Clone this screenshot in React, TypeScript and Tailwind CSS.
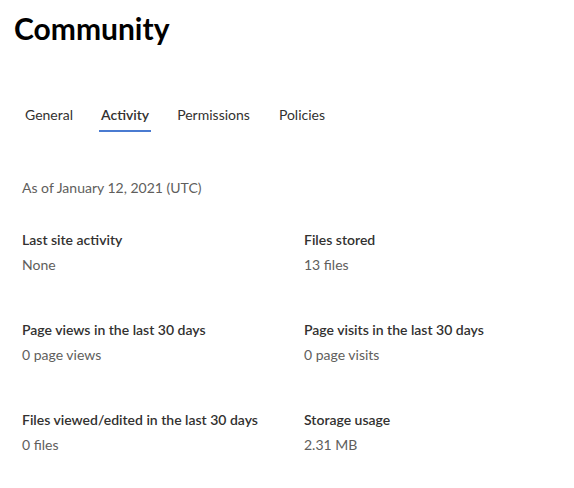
import { useState } from "react";

const tabs = ["General", "Activity", "Permissions", "Policies"];

const stats = [
    { label: "Last site activity", value: "None" },
    { label: "Files stored", value: "13 files" },
    { label: "Page views in the last 30 days", value: "0 page views" },
    { label: "Page visits in the last 30 days", value: "0 page visits" },
    { label: "Files viewed/edited in the last 30 days", value: "0 files" },
    { label: "Storage usage", value: "2.31 MB" },
];

const App: React.FC = () => {
    const [active, setActive] = useState("Activity");

    return (
        <div className="w-[574px] h-[488px] bg-white text-[#323130] overflow-hidden" style={{ fontFamily: 'Lato, "Open Sans", sans-serif' }}>
            <h1 className="pl-[14px] pt-[10px] text-[30px] leading-[36px] font-bold text-black">Community</h1>
            <div className="flex pl-[11px] mt-[50px]">
                {tabs.map((t) => (
                    <button
                        key={t}
                        onClick={() => setActive(t)}
                        className={`relative px-[14px] h-[36px] text-[14px] ${t === "Policies" ? "ml-[1px]" : ""} ${active === t ? "font-semibold" : ""}`}
                    >
                        {t}
                        {active === t && <span className="absolute left-[12px] right-[12px] bottom-0 h-[2px] bg-[#4a7bd1]" />}
                    </button>
                ))}
            </div>
            <div className="px-[22px] pt-[46px]">
                <p className="text-[14px] text-[#605e5c] leading-[20px]">As of January 12, 2021 (UTC)</p>
                <div className="grid grid-cols-[282px_1fr] gap-y-[45px] mt-[32px]">
                    {stats.map((s) => (
                        <div key={s.label} className="flex flex-col gap-[5px]">
                            <span className="text-[14px] font-semibold leading-[20px]">{s.label}</span>
                            <span className="text-[14px] text-[#605e5c] leading-[20px]">{s.value}</span>
                        </div>
                    ))}
                </div>
            </div>
        </div>
    );
};

export default App;
